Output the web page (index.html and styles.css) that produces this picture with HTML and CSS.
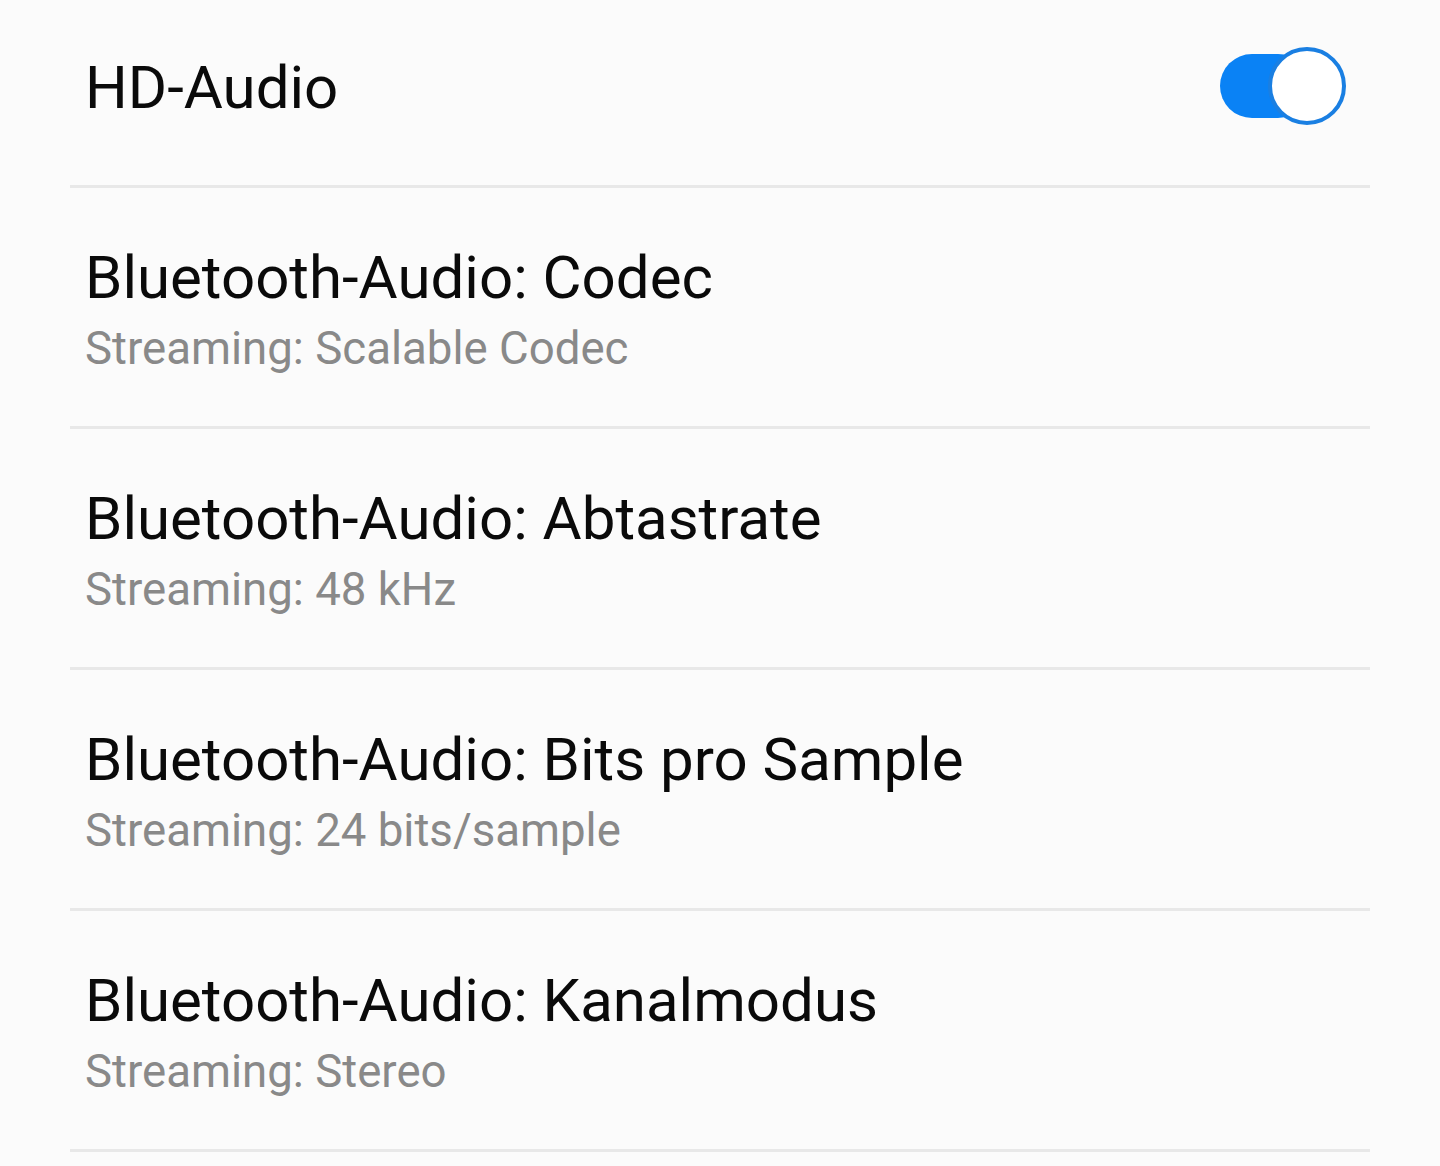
FILE: index.html
```html
<!DOCTYPE html>
<html lang="de">
<head>
<meta charset="utf-8">
<title>HD-Audio</title>
<link rel="stylesheet" href="styles.css">
</head>
<body>
<div class="list">
  <div class="row row-first">
    <div class="title">HD-Audio</div>
    <div class="switch" role="switch" aria-checked="true"><span class="thumb"></span></div>
  </div>
  <div class="row">
    <div class="text">
      <div class="title">Bluetooth-Audio: Codec</div>
      <div class="sub">Streaming: Scalable Codec</div>
    </div>
  </div>
  <div class="row">
    <div class="text">
      <div class="title">Bluetooth-Audio: Abtastrate</div>
      <div class="sub">Streaming: 48 kHz</div>
    </div>
  </div>
  <div class="row">
    <div class="text">
      <div class="title">Bluetooth-Audio: Bits pro Sample</div>
      <div class="sub">Streaming: 24 bits/sample</div>
    </div>
  </div>
  <div class="row">
    <div class="text">
      <div class="title">Bluetooth-Audio: Kanalmodus</div>
      <div class="sub">Streaming: Stereo</div>
    </div>
  </div>
</div>
</body>
</html>
```
FILE: styles.css
```css
html, body {
  margin: 0;
  padding: 0;
  background: #fbfbfb;
}
body {
  font-family: Roboto, "Noto Sans", sans-serif;
  width: 1440px;
  height: 1166px;
  overflow: hidden;
}
.list {
  margin-left: 70px;
  width: 1300px;
}
.row {
  height: 238px;
  border-bottom: 3px solid #e8e8e8;
  display: flex;
  align-items: center;
  justify-content: space-between;
  padding-left: 15px;
  padding-right: 24px;
  box-sizing: content-box;
}
.row-first {
  height: 175px;
  padding-bottom: 10px;
}
.row-first .switch {
  margin-top: -4px;
}
.text {
  display: flex;
  flex-direction: column;
  padding-top: 5px;
}
.title {
  font-size: 60px;
  line-height: 70px;
  color: #0a0a0a;
}
.sub {
  font-size: 45.6px;
  line-height: 56px;
  color: #898989;
  margin-top: 8px;
}
.switch {
  position: relative;
  width: 126px;
  height: 64px;
}
.switch::before {
  content: "";
  position: absolute;
  left: 0;
  top: 0;
  width: 90px;
  height: 64px;
  border-radius: 32px;
  background: #0a82f5;
}
.thumb {
  position: absolute;
  right: 0;
  top: -7px;
  width: 70px;
  height: 70px;
  border-radius: 50%;
  background: #fff;
  border: 4px solid #1a7fe2;
}
```
